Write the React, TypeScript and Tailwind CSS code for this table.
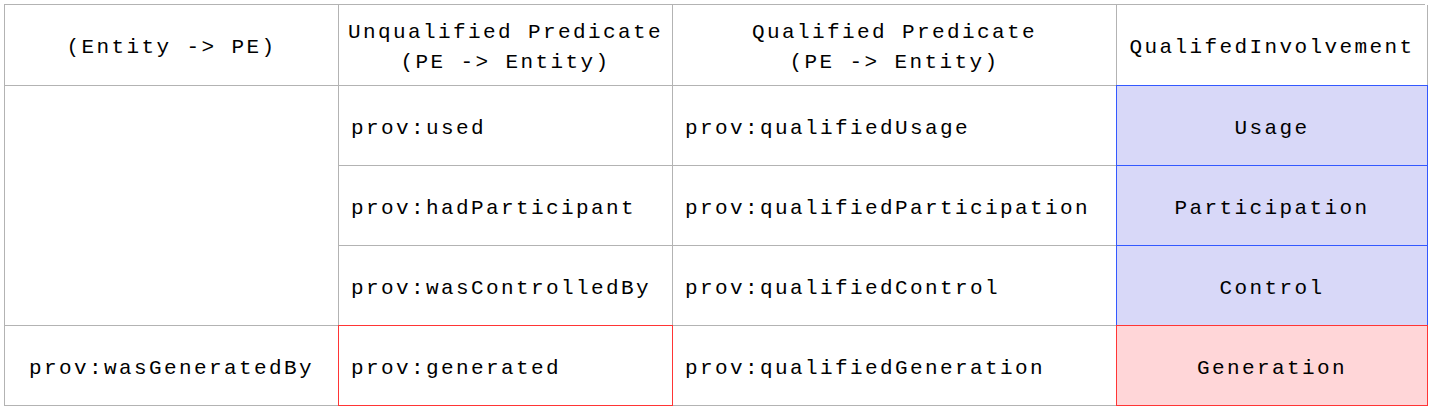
const rows = [
  { unq: "prov:used", q: "prov:qualifiedUsage", inv: "Usage" },
  { unq: "prov:hadParticipant", q: "prov:qualifiedParticipation", inv: "Participation" },
  { unq: "prov:wasControlledBy", q: "prov:qualifiedControl", inv: "Control" },
]

const cell = "border-r border-b border-[#b3b3b3] flex items-center pt-[6px]"
const blue = "-ml-px -mt-px border border-[#3358ff] bg-[#d8d8f8] flex items-center justify-center pt-[6px]"
const red = "-ml-px -mt-px border border-[#ff3535] flex items-center pt-[6px]"

export default function App() {
  return (
    <div className="p-1 bg-white text-black">
      <div
        className="grid grid-cols-[334px_334px_444px_311px] grid-rows-[81px_80px_80px_80px_80px] border-t border-l border-[#b3b3b3] text-[21px] tracking-[2.4px] leading-[30px]"
        style={{ fontFamily: '"Liberation Mono", "Courier New", monospace' }}
      >
        {/* header */}
        <div className={`${cell} justify-center text-center`}>(Entity -&gt; PE)</div>
        <div className={`${cell} justify-center text-center`}>
          Unqualified Predicate
          <br />
          (PE -&gt; Entity)
        </div>
        <div className={`${cell} justify-center text-center`}>
          Qualified Predicate
          <br />
          (PE -&gt; Entity)
        </div>
        <div className={`${cell} justify-center text-center`}>QualifedInvolvement</div>

        {/* involvement rows */}
        <div className={`${cell} row-span-3`} />
        {rows.map((r) => (
          <div key={r.inv} className="contents">
            <div className={`${cell} px-3`}>{r.unq}</div>
            <div className={`${cell} px-3`}>{r.q}</div>
            <div className={blue}>{r.inv}</div>
          </div>
        ))}

        {/* generation row */}
        <div className={`${cell} justify-center`}>prov:wasGeneratedBy</div>
        <div className={`${red} px-3`}>prov:generated</div>
        <div className={`${cell} px-3`}>prov:qualifiedGeneration</div>
        <div className={`${red} justify-center bg-[#ffd6d8]`}>Generation</div>
      </div>
    </div>
  )
}
